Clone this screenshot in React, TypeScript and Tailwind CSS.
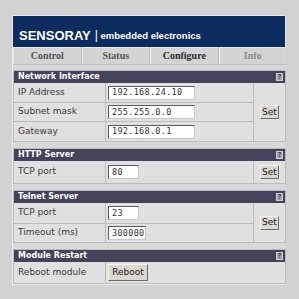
import React from "react";

type Row = { label: string; value?: string; inputW?: string; h: string };

const sans = "font-['DejaVu_Sans',sans-serif]";

const HelpIcon = () => (
  <span className="w-[7px] h-[8px] bg-[#a3a3a8] border border-[#d0d0d4] text-[#3a3a48] text-[7px] leading-[6px] font-bold flex items-center justify-center mr-[2px]">
    ?
  </span>
);

const Section = ({
  title,
  rows,
  setButton,
  reboot,
}: {
  title: string;
  rows: Row[];
  setButton?: boolean;
  reboot?: boolean;
}) => (
  <div className="border border-[#bcbcbc] bg-[#e0e0e0]">
    <div className="h-[12px] bg-[#45435a] flex items-center justify-between pl-[4px]">
      <span className={`${sans} text-[8px] font-bold text-white leading-none`}>{title}</span>
      <HelpIcon />
    </div>
    <div className="flex">
      <div className="flex-1 flex flex-col">
        {rows.map((row, i) => (
          <div
            key={i}
            className={`flex ${row.h} ${i < rows.length - 1 ? "border-b border-[#bdbdbd]" : ""}`}
          >
            <div className={`w-[92px] shrink-0 border-r border-[#bdbdbd] flex items-center pl-[4px] ${sans} text-[9px] text-[#3a3a3a]`}>
              {row.label}
            </div>
            <div className="flex-1 flex items-center pl-[2px]">
              {reboot ? (
                <button className={`h-[17px] w-[40px] bg-[#dcd8cf] border border-t-[#f4f4f4] border-l-[#f4f4f4] border-b-[#6a6a6a] border-r-[#6a6a6a] ${sans} text-[9px] text-[#222] leading-none`}>
                  Reboot
                </button>
              ) : (
                <div
                  className={`${row.inputW} h-[14px] bg-white border border-t-[#5a5a5a] border-l-[#5a5a5a] border-b-[#c8c8c8] border-r-[#c8c8c8] flex items-center pl-[3px] font-['DejaVu_Sans_Mono',monospace] text-[8.5px] tracking-[0.3px] text-[#333] leading-none`}
                >
                  {row.value}
                </div>
              )}
            </div>
          </div>
        ))}
      </div>
      {setButton && (
        <div className="w-[32px] border-l border-[#bdbdbd] flex items-center justify-center">
          <button className={`w-[19px] h-[14px] bg-[#dcd8cf] border border-t-[#f4f4f4] border-l-[#f4f4f4] border-b-[#6a6a6a] border-r-[#6a6a6a] ${sans} text-[9px] text-[#222] leading-none`}>
            Set
          </button>
        </div>
      )}
    </div>
  </div>
);

const tabs = [
  { name: "Control", color: "text-[#555]" },
  { name: "Status", color: "text-[#555]" },
  { name: "Configure", color: "text-[#2a2a2a]" },
  { name: "Info", color: "text-[#8a8a8a]" },
];

export default function App() {
  return (
    <div className="w-[299px] h-[299px] bg-[#d2d2d2] pt-[15px] pl-[12px] overflow-hidden">
      <div className="w-[274px] h-[270px] bg-[#d8d8d8] border-l border-b border-[#eaeaea] flex flex-col">
        <div className="h-[35px] bg-[#0c2b5e] border-t border-r border-[#e8e8e8] flex items-end pb-[5px] pl-[6px]">
          <span className="font-['Liberation_Sans',sans-serif] text-[13px] font-bold text-white leading-none">
            SENSORAY
          </span>
          <span className="font-['Liberation_Sans',sans-serif] text-[9.5px] font-bold text-white leading-none ml-[4px] mb-[1px]">
            <span className="text-[12px] font-normal">|</span> embedded electronics
          </span>
        </div>
        <div className="h-[20px] flex gap-px bg-[#bdbdbd] border-b border-[#bdbdbd]">
          {tabs.map((t) => (
            <div
              key={t.name}
              className={`flex-1 flex items-center justify-center bg-[#d4d4d4] border-t border-l border-[#ececec] font-['Liberation_Serif',serif] text-[10px] font-bold ${t.color}`}
            >
              {t.name}
            </div>
          ))}
        </div>
        <div className="flex flex-col gap-[6px] mt-[5px]">
          <Section
            title="Network Interface"
            setButton
            rows={[
              { label: "IP Address", value: "192.168.24.10", inputW: "w-[87px]", h: "h-[20px]" },
              { label: "Subnet mask", value: "255.255.0.0", inputW: "w-[87px]", h: "h-[19px]" },
              { label: "Gateway", value: "192.168.0.1", inputW: "w-[87px]", h: "h-[19px]" },
            ]}
          />
          <Section
            title="HTTP Server"
            setButton
            rows={[{ label: "TCP port", value: "80", inputW: "w-[31px]", h: "h-[22px]" }]}
          />
          <Section
            title="Telnet Server"
            setButton
            rows={[
              { label: "TCP port", value: "23", inputW: "w-[31px]", h: "h-[21px]" },
              { label: "Timeout (ms)", value: "300000", inputW: "w-[38px]", h: "h-[18px]" },
            ]}
          />
          <Section
            title="Module Restart"
            reboot
            rows={[{ label: "Reboot module", h: "h-[21px]" }]}
          />
        </div>
      </div>
    </div>
  );
}
